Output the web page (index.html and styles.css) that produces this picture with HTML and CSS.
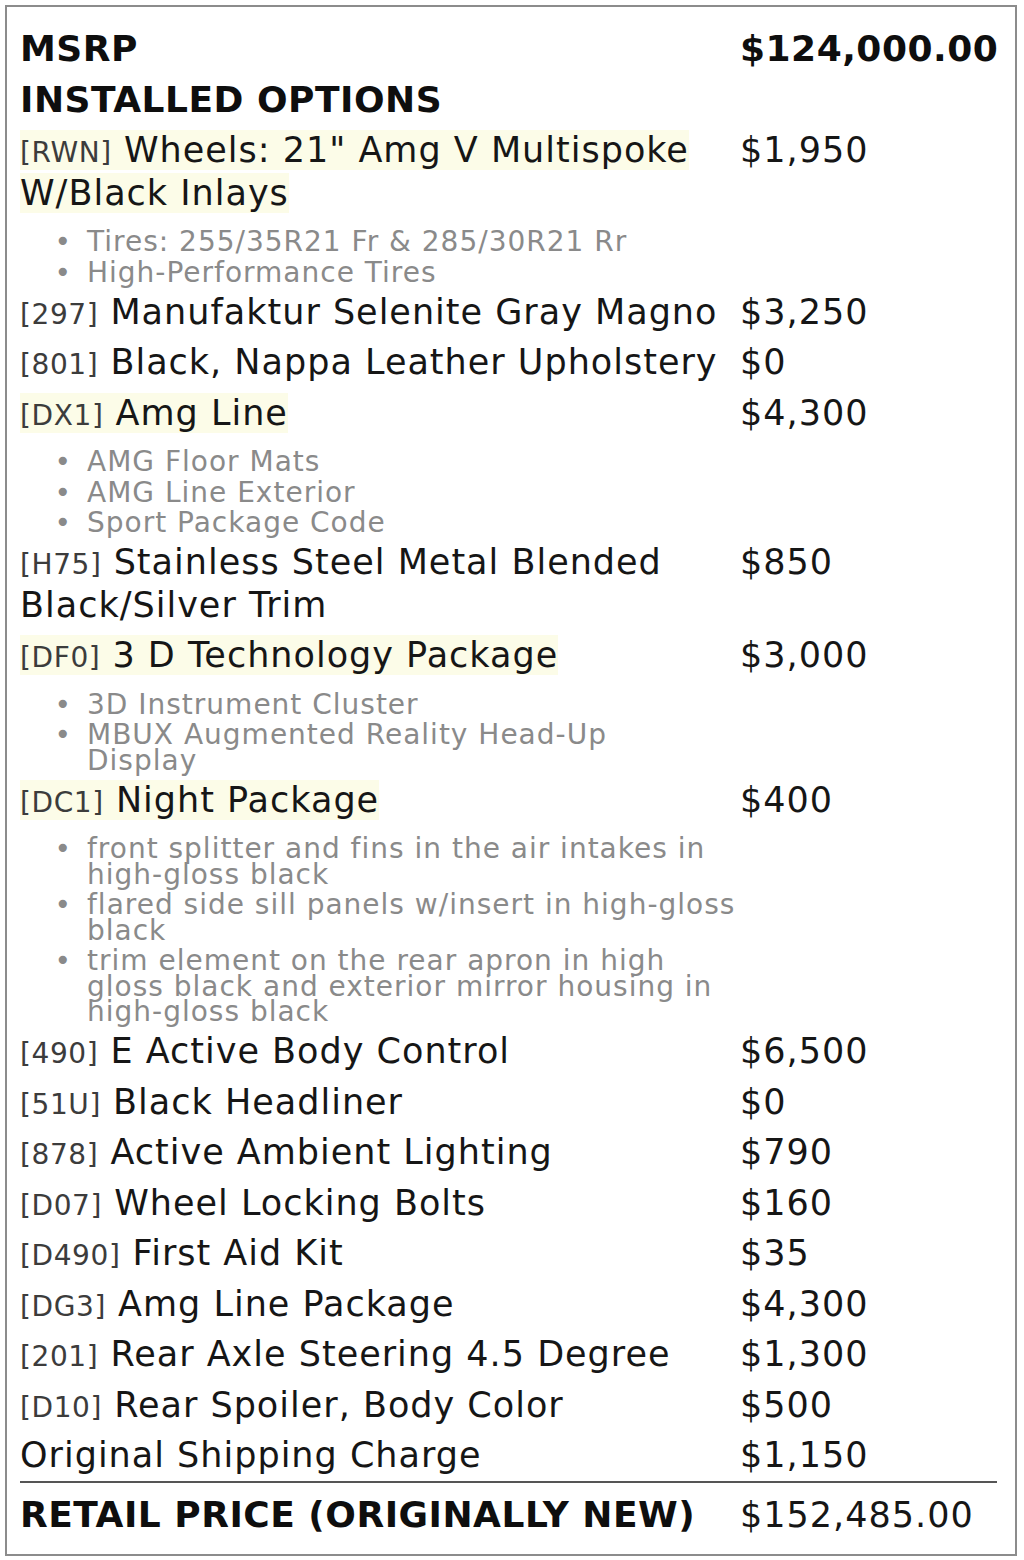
FILE: index.html
```html
<!DOCTYPE html>
<html lang="en">
<head>
<meta charset="utf-8">
<title>Window Sticker</title>
<link rel="stylesheet" href="styles.css">
</head>
<body>
<div class="sticker">
  <div class="row head">
    <div class="name">MSRP</div>
    <div class="price">$124,000.00</div>
  </div>
  <div class="row head">
    <div class="name">INSTALLED OPTIONS</div>
    <div class="price"></div>
  </div>

  <div class="row">
    <div class="desc">
      <div class="name"><span class="hl"><span class="code">[RWN]</span> Wheels: 21" Amg V Multispoke W/Black Inlays</span></div>
      <ul class="feats">
        <li>Tires: 255/35R21 Fr &amp; 285/30R21 Rr</li>
        <li>High-Performance Tires</li>
      </ul>
    </div>
    <div class="price">$1,950</div>
  </div>

  <div class="row">
    <div class="desc"><div class="name"><span class="code">[297]</span> Manufaktur Selenite Gray Magno</div></div>
    <div class="price">$3,250</div>
  </div>

  <div class="row">
    <div class="desc"><div class="name"><span class="code">[801]</span> Black, Nappa Leather Upholstery</div></div>
    <div class="price">$0</div>
  </div>

  <div class="row">
    <div class="desc">
      <div class="name"><span class="hl"><span class="code">[DX1]</span> Amg Line</span></div>
      <ul class="feats">
        <li>AMG Floor Mats</li>
        <li>AMG Line Exterior</li>
        <li>Sport Package Code</li>
      </ul>
    </div>
    <div class="price">$4,300</div>
  </div>

  <div class="row">
    <div class="desc"><div class="name"><span class="code">[H75]</span> Stainless Steel Metal Blended Black/Silver Trim</div></div>
    <div class="price">$850</div>
  </div>

  <div class="row">
    <div class="desc">
      <div class="name"><span class="hl"><span class="code">[DF0]</span> 3 D Technology Package</span></div>
      <ul class="feats feats-narrow">
        <li>3D Instrument Cluster</li>
        <li>MBUX Augmented Reality Head-Up Display</li>
      </ul>
    </div>
    <div class="price">$3,000</div>
  </div>

  <div class="row">
    <div class="desc">
      <div class="name"><span class="hl"><span class="code">[DC1]</span> Night Package</span></div>
      <ul class="feats">
        <li>front splitter and fins in the air intakes in high-gloss black</li>
        <li>flared side sill panels w/insert in high-gloss black</li>
        <li>trim element on the rear apron in high gloss black and exterior mirror housing in high-gloss black</li>
      </ul>
    </div>
    <div class="price">$400</div>
  </div>

  <div class="row">
    <div class="desc"><div class="name"><span class="code">[490]</span> E Active Body Control</div></div>
    <div class="price">$6,500</div>
  </div>

  <div class="row">
    <div class="desc"><div class="name"><span class="code">[51U]</span> Black Headliner</div></div>
    <div class="price">$0</div>
  </div>

  <div class="row">
    <div class="desc"><div class="name"><span class="code">[878]</span> Active Ambient Lighting</div></div>
    <div class="price">$790</div>
  </div>

  <div class="row">
    <div class="desc"><div class="name"><span class="code">[D07]</span> Wheel Locking Bolts</div></div>
    <div class="price">$160</div>
  </div>

  <div class="row">
    <div class="desc"><div class="name"><span class="code">[D490]</span> First Aid Kit</div></div>
    <div class="price">$35</div>
  </div>

  <div class="row">
    <div class="desc"><div class="name"><span class="code">[DG3]</span> Amg Line Package</div></div>
    <div class="price">$4,300</div>
  </div>

  <div class="row">
    <div class="desc"><div class="name"><span class="code">[201]</span> Rear Axle Steering 4.5 Degree</div></div>
    <div class="price">$1,300</div>
  </div>

  <div class="row">
    <div class="desc"><div class="name"><span class="code">[D10]</span> Rear Spoiler, Body Color</div></div>
    <div class="price">$500</div>
  </div>

  <div class="row">
    <div class="desc"><div class="name">Original Shipping Charge</div></div>
    <div class="price">$1,150</div>
  </div>

  <div class="row total">
    <div class="name">RETAIL PRICE (ORIGINALLY NEW)</div>
    <div class="price">$152,485.00</div>
  </div>
</div>
</body>
</html>
```

FILE: styles.css
```css
html, body {
  margin: 0;
  padding: 0;
  background: #ffffff;
}

body {
  font-family: "DejaVu Sans", "Verdana", sans-serif;
  color: #161616;
}

.sticker {
  margin: 5px;
  width: 1012px;
  box-sizing: border-box;
  border: 2px solid #8c8c8c;
  padding: 17px 18px 14px 13px;
}

.row {
  display: grid;
  grid-template-columns: 720px 1fr;
  align-items: start;
}

.name,
.price {
  font-size: 35px;
  letter-spacing: 1px;
  line-height: 42.5px;
  padding: 4px 0;
}

.head .name,
.head .price {
  font-weight: bold;
  font-size: 36px;
  letter-spacing: 0.5px;
  color: #0e0e0e;
}

.code {
  font-size: 28px;
  line-height: 1;
  letter-spacing: 0.6px;
  color: #3c3c3c;
}

.hl {
  background: #fcfce8;
}

.feats {
  margin: 11px 0 1.5px 0;
  padding: 0 0 0 67px;
  color: #8a8a8a;
  font-size: 28px;
  letter-spacing: 1px;
  line-height: 25.5px;
}

.feats-narrow {
  padding-right: 24px;
}

.feats li + li {
  margin-top: 5px;
}

.feats li::marker {
  content: "\2022\00a0";
  letter-spacing: 3.5px;
  color: #8a8a8a;
}

.total {
  border-top: 2px solid #555555;
}

.total .name,
.total .price {
  padding-top: 11px;
}

.total .name {
  font-weight: bold;
  font-size: 36px;
  letter-spacing: 0.5px;
  color: #0e0e0e;
}

.total .price {
  font-size: 35px;
}
```
